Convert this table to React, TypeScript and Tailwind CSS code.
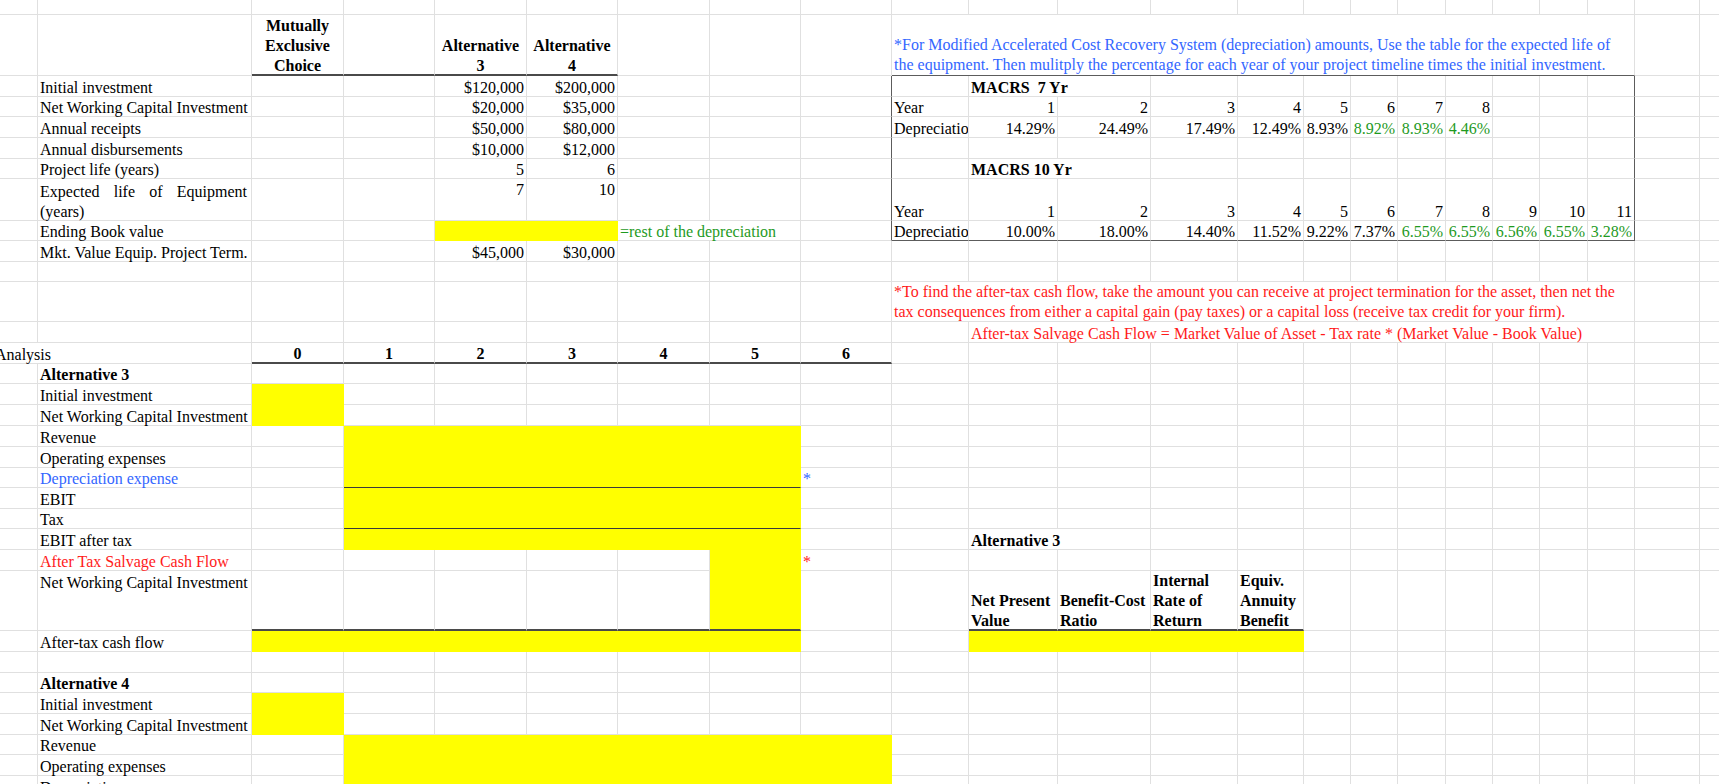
import React from 'react';

type Cell = {
  t?: React.ReactNode;
  n?: number;
  v?: string;
  h?: string;
  bw?: string;
  bc?: string;
  cls?: string;
  ti?: string;
};

type RowDef = { h: string; cells: Cell[] };

// column widths A..W, taken from the sheet
const GRID =
  'grid grid-cols-[38px_214px_92px_91px_92px_91px_92px_91px_91px_77px_89px_93px_87px_66px_47px_47px_48px_47px_47px_48px_47px_65px_1fr]';

const SPAN: Record<number, string> = {
  1: 'col-span-1',
  2: 'col-span-2',
  3: 'col-span-3',
  4: 'col-span-4',
  5: 'col-span-5',
  6: 'col-span-6',
  11: 'col-span-11',
  12: 'col-span-12',
};

const GRAY = 'border-r-[#e0e0e0] border-b-[#e0e0e0]';
const BOX_R = 'border-r-[#5c5c5c] border-b-[#e0e0e0]';
const DARK_B = 'border-r-[#e0e0e0] border-b-[#4a4a4a]';
const BOX_BR = 'border-r-[#5c5c5c] border-b-[#5c5c5c]';
const BOX_B = 'border-r-[#e0e0e0] border-b-[#5c5c5c]';
const YEL = 'border-r-[#ffff00] border-b-[#ffff00]';
const YEL_LINE = 'border-r-[#ffff00] border-b-[#3a3a3a]';

const BLUE = 'text-[#3366ff]';
const RED = 'text-[#ff1a1a]';
const GREEN = 'text-[#1f9a1f]';

const blank = (k: number): Cell[] => Array.from({ length: k }, () => ({}));
const lab = (t: string, cls?: string): Cell => ({ t, cls });
const num = (t: string, cls?: string, bc?: string): Cell => ({ t, h: 'justify-end', cls, bc });
const yel = (n: number, bc = YEL, bw?: string): Cell => ({ n, bc, bw, cls: 'bg-[#ffff00]' });
const head = (t: React.ReactNode): Cell => ({
  t,
  h: 'justify-center',
  cls: 'font-bold text-center',
  bw: 'border-r border-b-2',
  bc: DARK_B,
});
const colHead = (t: React.ReactNode): Cell => ({
  t,
  cls: 'font-bold',
  bw: 'border-r border-b-2',
  bc: DARK_B,
});

const rows: RowDef[] = [
  { h: 'h-[15px]', cells: [] },
  {
    h: 'h-[61px]',
    cells: [
      {},
      {},
      head(<>Mutually<br />Exclusive<br />Choice</>),
      { bw: 'border-r border-b-2', bc: DARK_B },
      head(<>Alternative<br />3</>),
      head(<>Alternative<br />4</>),
      {},
      {},
      {},
      {
        n: 12,
        cls: BLUE,
        bc: BOX_B,
        ti: 'mb-0',
        t: (
          <>
            *For Modified Accelerated Cost Recovery System (depreciation) amounts, Use the table for the expected life of
            <br />
            the equipment. Then mulitply the percentage for each year of your project timeline times the initial investment.
          </>
        ),
      },
    ],
  },
  {
    h: 'h-[21px]',
    cells: [
      {},
      lab('Initial investment'),
      {},
      {},
      num('$120,000'),
      num('$200,000'),
      {},
      {},
      { bc: BOX_R },
      {},
      { n: 2, t: 'MACRS  7 Yr', cls: 'font-bold whitespace-pre' },
      ...blank(8),
      { bc: BOX_R },
    ],
  },
  {
    h: 'h-[20px]',
    cells: [
      {},
      lab('Net Working Capital Investment'),
      {},
      {},
      num('$20,000'),
      num('$35,000'),
      {},
      {},
      { bc: BOX_R },
      lab('Year'),
      num('1'),
      num('2'),
      num('3'),
      num('4'),
      num('5'),
      num('6'),
      num('7'),
      num('8'),
      {},
      {},
      { bc: BOX_R },
    ],
  },
  {
    h: 'h-[21px]',
    cells: [
      {},
      lab('Annual receipts'),
      {},
      {},
      num('$50,000'),
      num('$80,000'),
      {},
      {},
      { bc: BOX_R },
      lab('Depreciation', 'overflow-hidden'),
      num('14.29%'),
      num('24.49%'),
      num('17.49%'),
      num('12.49%'),
      num('8.93%'),
      num('8.92%', GREEN),
      num('8.93%', GREEN),
      num('4.46%', GREEN),
      {},
      {},
      { bc: BOX_R },
    ],
  },
  {
    h: 'h-[21px]',
    cells: [
      {},
      lab('Annual disbursements'),
      {},
      {},
      num('$10,000'),
      num('$12,000'),
      {},
      {},
      { bc: BOX_R },
      ...blank(11),
      { bc: BOX_R },
    ],
  },
  {
    h: 'h-[20px]',
    cells: [
      {},
      lab('Project life (years)'),
      {},
      {},
      num('5'),
      num('6'),
      {},
      {},
      { bc: BOX_R },
      {},
      { n: 2, t: 'MACRS 10 Yr', cls: 'font-bold' },
      ...blank(8),
      { bc: BOX_R },
    ],
  },
  {
    h: 'h-[42px]',
    cells: [
      {},
      {
        t: 'Expected life of Equipment (years)',
        ti: 'w-full whitespace-normal text-justify mb-[-2px]',
        cls: 'pr-[4px]',
      },
      {},
      {},
      { t: '7', h: 'justify-end', v: 'items-start', ti: 'mt-[1px]' },
      { t: '10', h: 'justify-end', v: 'items-start', ti: 'mt-[1px]' },
      {},
      {},
      { bc: BOX_R },
      lab('Year'),
      num('1'),
      num('2'),
      num('3'),
      num('4'),
      num('5'),
      num('6'),
      num('7'),
      num('8'),
      num('9'),
      num('10'),
      num('11', undefined, BOX_R),
    ],
  },
  {
    h: 'h-[20px]',
    cells: [
      {},
      lab('Ending Book value'),
      {},
      {},
      yel(2),
      { n: 2, t: '=rest of the depreciation', cls: GREEN },
      { bc: BOX_R },
      { t: 'Depreciation', cls: 'overflow-hidden', bc: BOX_B },
      num('10.00%', undefined, BOX_B),
      num('18.00%', undefined, BOX_B),
      num('14.40%', undefined, BOX_B),
      num('11.52%', undefined, BOX_B),
      num('9.22%', undefined, BOX_B),
      num('7.37%', undefined, BOX_B),
      num('6.55%', GREEN, BOX_B),
      num('6.55%', GREEN, BOX_B),
      num('6.56%', GREEN, BOX_B),
      num('6.55%', GREEN, BOX_B),
      num('3.28%', GREEN, BOX_BR),
    ],
  },
  {
    h: 'h-[21px]',
    cells: [{}, lab('Mkt. Value Equip. Project Term.'), {}, {}, num('$45,000'), num('$30,000')],
  },
  { h: 'h-[20px]', cells: [] },
  {
    h: 'h-[40px]',
    cells: [
      ...blank(9),
      {
        n: 12,
        cls: RED,
        ti: 'mb-[-1px]',
        t: (
          <>
            *To find the after-tax cash flow, take the amount you can receive at project termination for the asset, then net the
            <br />
            tax consequences from either a capital gain (pay taxes) or a capital loss (receive tax credit for your firm).
          </>
        ),
      },
    ],
  },
  {
    h: 'h-[21px]',
    cells: [
      ...blank(10),
      {
        n: 11,
        cls: RED,
        t: 'After-tax Salvage Cash Flow = Market Value of Asset - Tax rate * (Market Value - Book Value)',
      },
    ],
  },
  {
    h: 'h-[21px]',
    cells: [
      { n: 2, t: 'Analysis', ti: 'ml-[-5px] mb-[-2px]', cls: 'pl-0' },
      head('0'),
      head('1'),
      head('2'),
      head('3'),
      head('4'),
      head('5'),
      head('6'),
    ],
  },
  { h: 'h-[20px]', cells: [{}, lab('Alternative 3', 'font-bold')] },
  { h: 'h-[21px]', cells: [{}, lab('Initial investment'), yel(1)] },
  { h: 'h-[21px]', cells: [{}, lab('Net Working Capital Investment'), yel(1)] },
  { h: 'h-[21px]', cells: [{}, lab('Revenue'), {}, yel(5)] },
  { h: 'h-[21px]', cells: [{}, lab('Operating expenses'), {}, yel(5)] },
  {
    h: 'h-[20px]',
    cells: [{}, lab('Depreciation expense', BLUE), {}, yel(5, YEL_LINE), lab('*', BLUE)],
  },
  { h: 'h-[21px]', cells: [{}, lab('EBIT'), {}, yel(5)] },
  { h: 'h-[20px]', cells: [{}, lab('Tax'), {}, yel(5, YEL_LINE)] },
  {
    h: 'h-[21px]',
    cells: [
      {},
      lab('EBIT after tax'),
      {},
      yel(5),
      {},
      {},
      { n: 2, t: 'Alternative 3', cls: 'font-bold' },
    ],
  },
  {
    h: 'h-[21px]',
    cells: [{}, lab('After Tax Salvage Cash Flow', RED), ...blank(5), yel(1), lab('*', RED)],
  },
  {
    h: 'h-[60px]',
    cells: [
      {},
      { t: 'Net Working Capital Investment', v: 'items-start', ti: 'mt-[2px]' },
      { bw: 'border-r border-b-2', bc: DARK_B },
      { bw: 'border-r border-b-2', bc: DARK_B },
      { bw: 'border-r border-b-2', bc: DARK_B },
      { bw: 'border-r border-b-2', bc: DARK_B },
      { bw: 'border-r border-b-2', bc: DARK_B },
      yel(1, 'border-r-[#ffff00] border-b-[#4a4a4a]', 'border-r border-b-2'),
      {},
      {},
      colHead(<>Net Present<br />Value</>),
      colHead(<>Benefit-Cost<br />Ratio</>),
      colHead(<>Internal<br />Rate of<br />Return</>),
      colHead(<>Equiv.<br />Annuity<br />Benefit</>),
    ],
  },
  {
    h: 'h-[21px]',
    cells: [{}, lab('After-tax cash flow'), yel(6), {}, {}, yel(4)],
  },
  { h: 'h-[21px]', cells: [] },
  { h: 'h-[20px]', cells: [{}, lab('Alternative 4', 'font-bold')] },
  { h: 'h-[21px]', cells: [{}, lab('Initial investment'), yel(1)] },
  { h: 'h-[21px]', cells: [{}, lab('Net Working Capital Investment'), yel(1)] },
  { h: 'h-[20px]', cells: [{}, lab('Revenue'), {}, yel(6)] },
  { h: 'h-[21px]', cells: [{}, lab('Operating expenses'), {}, yel(6)] },
  { h: 'h-[21px]', cells: [{}, lab('Depreciation expense'), {}, yel(6)] },
];

function SheetRow({ h, cells }: RowDef) {
  const used = cells.reduce((s, c) => s + (c.n ?? 1), 0);
  const all = [...cells, ...blank(Math.max(0, 23 - used))];

  return (
    <div className={`${GRID} ${h}`}>
      {all.map((c, i) => (
        <div
          key={i}
          className={`${SPAN[c.n ?? 1]} flex min-w-0 px-[2px] whitespace-nowrap ${c.v ?? 'items-end'} ${
            c.h ?? 'justify-start'
          } ${c.bw ?? 'border-r border-b'} ${c.bc ?? GRAY} ${c.cls ?? ''}`}
        >
          {c.t !== undefined && <div className={c.ti ?? 'mb-[-2px]'}>{c.t}</div>}
        </div>
      ))}
    </div>
  );
}

export default function App() {
  return (
    <div className="w-[1719px] h-[784px] overflow-hidden bg-white text-black font-['Liberation_Serif','Times_New_Roman',serif] text-[16px] leading-[20px]">
      <div className="w-[1740px]">
        {rows.map((r, i) => (
          <SheetRow key={i} h={r.h} cells={r.cells} />
        ))}
      </div>
    </div>
  );
}
